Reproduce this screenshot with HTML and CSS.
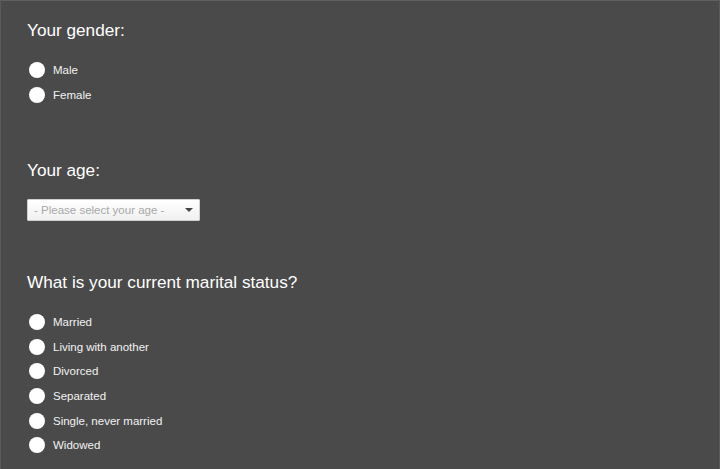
FILE: index.html
```html
<!DOCTYPE html>
<html lang="en">
<head>
<meta charset="utf-8">
<title>Survey</title>
<link rel="stylesheet" href="styles.css">
</head>
<body>
<main class="page">
  <section class="question">
    <h2 class="question-title">Your gender:</h2>
    <div class="options">
      <label class="option"><span class="radio"></span><span class="option-text">Male</span></label>
      <label class="option"><span class="radio"></span><span class="option-text">Female</span></label>
    </div>
  </section>
  <section class="question">
    <h2 class="question-title">Your age:</h2>
    <div class="select">
      <span class="select-text">- Please select your age -</span>
      <span class="caret"></span>
    </div>
  </section>
  <section class="question question-after-select">
    <h2 class="question-title">What is your current marital status?</h2>
    <div class="options">
      <label class="option"><span class="radio"></span><span class="option-text">Married</span></label>
      <label class="option"><span class="radio"></span><span class="option-text">Living with another</span></label>
      <label class="option"><span class="radio"></span><span class="option-text">Divorced</span></label>
      <label class="option"><span class="radio"></span><span class="option-text">Separated</span></label>
      <label class="option"><span class="radio"></span><span class="option-text">Single, never married</span></label>
      <label class="option"><span class="radio"></span><span class="option-text">Widowed</span></label>
    </div>
  </section>
</main>
</body>
</html>
```
FILE: styles.css
```css
html, body {
  margin: 0;
  padding: 0;
  height: 100%;
  background: #4a4a4a;
}
body {
  font-family: "Liberation Sans", Arial, sans-serif;
  color: #ffffff;
  overflow: hidden;
}
.page {
  box-sizing: border-box;
  height: 469px;
  border-top: 1px solid #606060;
  border-left: 1px solid #5a5a5a;
  border-right: 1px solid #5a5a5a;
  padding: 18px 0 0 26px;
}
.question + .question {
  margin-top: 52.3px;
}
.question + .question-after-select {
  margin-top: 49.5px;
}
.question-title {
  margin: 0;
  font-size: 17.2px;
  line-height: 22px;
  font-weight: normal;
  color: #ffffff;
}
.options {
  margin-top: 16.6px;
  display: flex;
  flex-direction: column;
}
.option {
  display: flex;
  align-items: center;
  height: 24.7px;
  gap: 8px;
  padding-left: 2px;
}
.radio {
  width: 16px;
  height: 16px;
  border-radius: 50%;
  background: #ffffff;
  flex: none;
}
.option-text {
  font-size: 11.5px;
  color: #f2f2f2;
}
.select {
  margin-top: 18.2px;
  box-sizing: border-box;
  width: 173px;
  height: 22px;
  display: flex;
  align-items: center;
  justify-content: space-between;
  padding: 0 6px 0 6px;
  background: linear-gradient(#ffffff, #f0f0f0);
  border: 1px solid #d0d0d0;
  border-radius: 1px;
}
.select-text {
  font-size: 11.5px;
  color: #a8a8a8;
}
.caret {
  width: 0;
  height: 0;
  border-left: 4px solid transparent;
  border-right: 4px solid transparent;
  border-top: 4px solid #444444;
}
```
